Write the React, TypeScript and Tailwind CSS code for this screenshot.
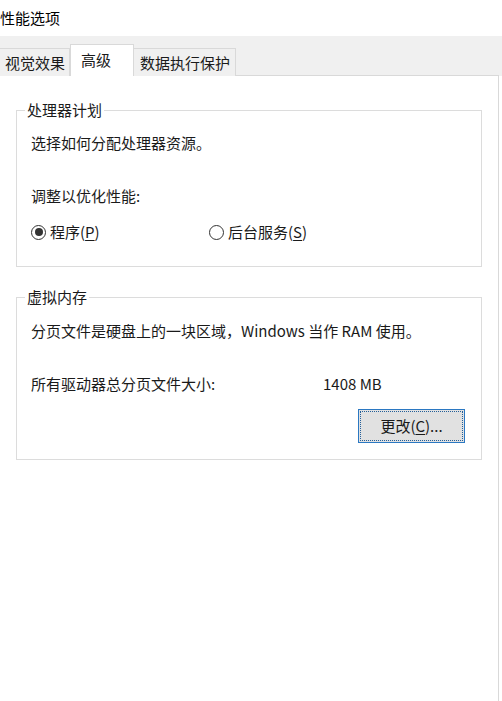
const font = "font-['Microsoft_YaHei','Noto_Sans_CJK_SC',sans-serif]";

const Radio = ({ checked, label, hotkey }: { checked: boolean; label: string; hotkey: string }) => (
  <div className="flex items-center gap-[4px]">
    <span className="flex h-[15px] w-[15px] items-center justify-center rounded-full border border-[#333] bg-white">
      {checked && <span className="h-[8px] w-[8px] rounded-full bg-[#333]" />}
    </span>
    <span>
      {label}(<span className="underline underline-offset-2">{hotkey}</span>)
    </span>
  </div>
);

const GroupBox = ({ title, className, children }: { title: string; className?: string; children: React.ReactNode }) => (
  <fieldset className={`mx-[16px] w-[466px] border border-[#dcdcdc] ${className ?? ""}`}>
    <legend className="ml-[8px] px-[2px] leading-[20px]">{title}</legend>
    {children}
  </fieldset>
);

const App = () => {
  return (
    <div className={`h-[701px] w-[502px] overflow-hidden bg-white text-[15px] leading-[20px] text-[#1a1a1a] ${font}`}>
      {/* title bar */}
      <div className="flex h-[36px] items-center">
        <span className="text-black">性能选项</span>
      </div>

      {/* tab strip */}
      <div className="flex h-[40px] items-end bg-[#f0f0f0]">
        <div className="-ml-px flex h-[28px] w-[71px] items-center border border-b-0 border-[#d9d9d9] pl-[5px]">视觉效果</div>
        <div className="flex h-[32px] w-[64px] items-center border border-b-0 border-[#d9d9d9] bg-white pb-[2px] pl-[10px]">高级</div>
        <div className="flex h-[28px] w-[102px] items-center border-b-0 border-r border-t border-[#d9d9d9] pl-[6px]">数据执行保护</div>
        <div className="h-px w-[263px] bg-[#d9d9d9]" />
      </div>

      {/* page */}
      <div className="flex h-[625px]">
        <div className="w-[499px] border-r border-[#d9d9d9] bg-white pt-[24px]">
          <GroupBox title="处理器计划">
            <div className="px-[14px] pb-[24px] pt-[13px]">
              <p>选择如何分配处理器资源。</p>
              <p className="mt-[33px]">调整以优化性能:</p>
              <div className="mt-[16px] flex">
                <div className="w-[178px]">
                  <Radio checked label="程序" hotkey="P" />
                </div>
                <Radio checked={false} label="后台服务" hotkey="S" />
              </div>
            </div>
          </GroupBox>

          <GroupBox title="虚拟内存" className="mt-[20px]">
            <div className="pb-[16px] pl-[14px] pr-[16px] pt-[14px]">
              <p>分页文件是硬盘上的一块区域，Windows 当作 RAM 使用。</p>
              <div className="mt-[33px] flex">
                <span className="w-[292px]">所有驱动器总分页文件大小:</span>
                <span>1408 MB</span>
              </div>
              <div className="mt-[15px] flex justify-end">
                <button className="h-[34px] w-[107px] border border-[#2b78c2] bg-[#e1e1e1] p-px">
                  <span className="flex h-full w-full items-center justify-center border border-dotted border-[#245f99]">
                    更改(<span className="underline underline-offset-2">C</span>)...
                  </span>
                </button>
              </div>
            </div>
          </GroupBox>
        </div>
        <div className="flex-1 bg-white" />
      </div>
    </div>
  );
};

export default App;
